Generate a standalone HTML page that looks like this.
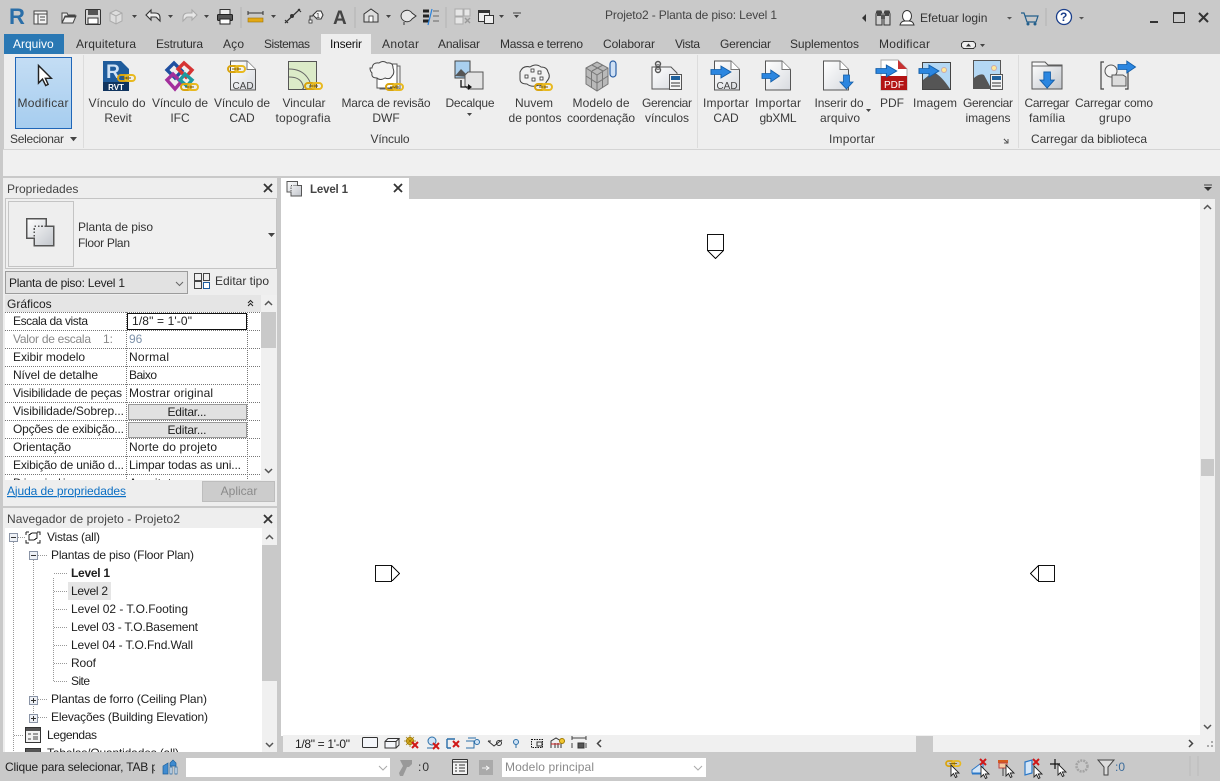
<!DOCTYPE html>
<html lang="pt"><head><meta charset="utf-8"><title>Projeto2 - Planta de piso: Level 1</title>
<style>
html,body{margin:0;padding:0;width:1220px;height:781px;overflow:hidden;background:#c9c9c9}
svg{display:block}
text{font-family:"Liberation Sans",sans-serif;font-size:12px;fill:#1e1e1e}
.r text,text.m{text-anchor:middle}
.t text{fill:#303030}
.r text{fill:#3a3a3a}
</style></head><body>
<svg width="1220" height="781" viewBox="0 0 1220 781" xmlns="http://www.w3.org/2000/svg" shape-rendering="crispEdges">
<defs>
<linearGradient id="pg" x1="0" y1="0" x2="1" y2="1"><stop offset="0" stop-color="#fff"/><stop offset="1" stop-color="#d8dbe0"/></linearGradient>
<linearGradient id="bl" x1="0" y1="0" x2="0" y2="1"><stop offset="0" stop-color="#c4ddf4"/><stop offset="1" stop-color="#a6cdef"/></linearGradient>
<linearGradient id="fl" x1="0" y1="0" x2="1" y2="1"><stop offset="0" stop-color="#fff"/><stop offset="1" stop-color="#c2c6cc"/></linearGradient>
<g id="chain" shape-rendering="auto"><rect x="0" y="0" width="10" height="6" rx="3" fill="none" stroke="#d9a40e" stroke-width="2"/><rect x="7" y="0" width="10" height="6" rx="3" fill="none" stroke="#e8b920" stroke-width="2"/><path d="M4 3h9" stroke="#7a5b05" stroke-width="1"/></g>
<g id="page" shape-rendering="auto"><path d="M.5.5H17L25.500 9V29.500H.5Z" fill="url(#pg)" stroke="#555"/><path d="M17 .5V9H25.500" fill="#fff" stroke="#777"/></g>
<path id="arr" shape-rendering="auto" d="M0 3.500H8V0L16 6 8 12V8.500H0Z" fill="#2b86e0" stroke="#125da8" stroke-width=".8"/>
<path id="arrd" shape-rendering="auto" d="M3.500 0H9.500V7H13L6.500 14 0 7H3.500Z" fill="#2b86e0" stroke="#125da8" stroke-width=".8"/>
<g id="x" shape-rendering="auto"><path d="M0 0L8 8M8 0L0 8" stroke="#333" stroke-width="1.800"/></g>
<g id="xr" shape-rendering="auto"><path d="M0 0L6 6M6 0L0 6" stroke="#d01818" stroke-width="2"/></g>
<g id="cur" shape-rendering="auto"><path d="M0 0V11L2.500 8.500 4.500 12.500 6 11.800 4.300 8H8Z" fill="#fff" stroke="#222" stroke-width=".9"/></g>
<path id="dd" d="M0 0h5l-2.500 3z" fill="#444" shape-rendering="auto"/>
<g id="fplan"><path d="M.5.5H12V5H16.500V16.500H5V12H.5Z" fill="url(#fl)" stroke="#555"/><rect x="5" y="5" width="11.500" height="11.500" fill="none" stroke="#555" stroke-dasharray="1 1"/></g>
<g id="minus"><rect x=".5" y=".5" width="8" height="8" fill="#eef1f6" stroke="#8a94a6"/><path d="M2 4.500h5" stroke="#333"/></g>
<g id="plus"><rect x=".5" y=".5" width="8" height="8" fill="#eef1f6" stroke="#8a94a6"/><path d="M2 4.500h5M4.500 2v5" stroke="#333"/></g>
<clipPath id="propclip"><rect x="5" y="295" width="256" height="185"/></clipPath>
<clipPath id="treeclip"><rect x="5" y="528" width="257" height="224"/></clipPath>
<clipPath id="stclip"><rect x="0" y="752" width="155" height="29"/></clipPath>
</defs>

<!-- base -->
<rect width="1220" height="781" fill="#c9c9c9"/>

<!-- QAT -->
<g shape-rendering="auto">
<text x="9" y="24" style="font-size:22px;font-weight:bold;fill:#2a6ea8">R</text>
<rect x="34" y="11" width="13" height="13" fill="#f4f4f4" stroke="#444"/><path d="M34 14h13M38 14v10M40 17h5M40 20h5" stroke="#444" stroke-width="1" fill="none"/>
<path d="M62 13h5l1 2h7v2H65l-3 6zm0 10h11l3-7H65z" fill="#eee" stroke="#444"/>
<rect x="85.500" y="9.500" width="15" height="15" rx="1" fill="#d8d8d8" stroke="#333"/><rect x="88" y="10" width="10" height="5" fill="#555"/><rect x="88" y="18" width="10" height="6" fill="#fff" stroke="#333"/>
<path d="M110 13l6-3 6 3v8l-6 3-6-3z" fill="#ddd" stroke="#aaa"/><path d="M110 13l6 3 6-3M116 16v8" stroke="#aaa" fill="none"/>
<use href="#dd" x="132" y="15"/>
<path d="M146 15l5-5v3h4q5 0 5 5v3l-3-3q0-1-2-1h-4v3z" fill="#eee" stroke="#333" stroke-width="1.100"/>
<use href="#dd" x="168" y="15"/>
<path d="M197 15l-5-5v3h-4q-5 0-5 5v3l3-3q0-1 2-1h4v3z" fill="#e6e6e6" stroke="#aaa" stroke-width="1.100"/>
<use href="#dd" x="204" y="15"/>
<rect x="220" y="9.500" width="10" height="6" fill="#eee" stroke="#333"/><rect x="217.500" y="14.500" width="15" height="6" rx="1" fill="#555" stroke="#222"/><rect x="220" y="19" width="10" height="5" fill="#fff" stroke="#222"/>
<path d="M248 13h15M248 11v4M263 11v4" stroke="#333" fill="none"/><rect x="248" y="18" width="15" height="4" fill="#e3a814" stroke="#9c7308" stroke-width=".6"/>
<use href="#dd" x="271" y="15"/>
<path d="M285 23l15-14M285 20l3 3M298 9l3 3" stroke="#333" stroke-width="1.200" fill="none"/><circle cx="292" cy="16" r="2" fill="#333"/>
<path d="M310 21v-5h3" stroke="#333" fill="none"/><rect x="309" y="20" width="3" height="3" fill="#fff" stroke="#333" stroke-width=".8"/><path d="M313 15l4-4h4l2 4-2 4h-4z" fill="#f5f5f5" stroke="#333"/><text x="316" y="18" style="font-size:7px">1</text>
<text x="333" y="24" style="font-size:19px;font-weight:bold;fill:#444">A</text>
<path d="M364 14l7-5 7 5v8h-14z" fill="#ddd" stroke="#333"/><rect x="369" y="16" width="4" height="6" fill="#fff" stroke="#333" stroke-width=".8"/>
<use href="#dd" x="386" y="15"/>
<path d="M401 16a6 6 0 0 1 11-3l4 3-4 3a6 6 0 0 1-11-3z" fill="#e6e6e6" stroke="#333"/><path d="M404 22v3" stroke="#333"/>
<path d="M423 11h6M423 16h6M423 21h6" stroke="#222" stroke-width="3" fill="none"/><path d="M433 11h6M433 16h6M433 21h6" stroke="#666" fill="none"/><path d="M432 9l-4 16" stroke="#2a83dc" stroke-width="1.200"/>
<rect x="455" y="9" width="8" height="7" fill="#e6e6e6" stroke="#aaa"/><rect x="464" y="9" width="6" height="7" fill="#e6e6e6" stroke="#aaa"/><rect x="455" y="17" width="8" height="7" fill="#e6e6e6" stroke="#aaa"/><path d="M465 18l5 5M470 18l-5 5" stroke="#999" stroke-width="1.400"/>
<rect x="478.500" y="10.500" width="11" height="11" fill="#eee" stroke="#333"/><rect x="484.500" y="15.500" width="9" height="8" fill="#eee" stroke="#333"/><rect x="479" y="11" width="10" height="2" fill="#333"/>
<use href="#dd" x="499" y="15"/>
<path d="M513 13h8" stroke="#444"/><use href="#dd" x="514" y="15"/>
</g>
<path d="M241 7v21M355 7v21M446 7v21M1046 8v18" stroke="#b2b2b2"/>
<text class="m" x="691" y="19" textLength="172" style="fill:#444">Projeto2 - Planta de piso: Level 1</text>

<g shape-rendering="auto">
<path d="M866 14v8l-4-4z" fill="#333"/>
<path d="M876 14l1-3h4l1 3v11h-6zM884 14l1-3h4l1 3v11h-6z" fill="#cfcfcf" stroke="#333"/><rect x="877" y="11" width="4" height="5" fill="#444"/><rect x="885" y="11" width="4" height="5" fill="#444"/><rect x="881" y="15" width="4" height="4" fill="#555"/>
<ellipse cx="907" cy="16" rx="4.500" ry="5.500" fill="#fff" stroke="#333"/><path d="M900 25q1-4 5-4h4q4 0 5 4z" fill="#fff" stroke="#333"/>
<path d="M1021 13h3l3 9h9l2-6h-13" fill="none" stroke="#235f8c" stroke-width="1.200"/><circle cx="1028" cy="24" r="1.500" fill="#235f8c"/><circle cx="1035" cy="24" r="1.500" fill="#235f8c"/>
<circle cx="1064" cy="17" r="7.500" fill="#fff" stroke="#1b3f8b" stroke-width="1.300"/>
<path d="M1007 17h5l-2.500 2.500zM1079 17h5l-2.500 2.500z" fill="#555"/>
</g>
<text x="920" y="22" style="fill:#333">Efetuar login</text>
<text x="1060" y="21" style="font-weight:bold;font-size:12px;fill:#1b3f8b">?</text>
<rect x="1150" y="21" width="8" height="2" fill="#333"/>
<rect x="1173.500" y="12.500" width="11" height="10" fill="none" stroke="#333" stroke-width="1"/><rect x="1173" y="12" width="12" height="2" fill="#333"/>
<path d="M1199 13l9 9M1208 13l-9 9" stroke="#333" stroke-width="2" shape-rendering="auto"/>

<!-- tabs -->
<rect x="4" y="34" width="60" height="20" fill="#2a78b4"/>
<text x="13" y="48" style="fill:#fff">Arquivo</text>
<rect x="321" y="34" width="50" height="20" fill="#eeeeee"/>
<g class="t">
<text x="76" y="48" textLength="60">Arquitetura</text>
<text x="156" y="48" textLength="47">Estrutura</text>
<text x="223" y="48" textLength="21">Aço</text>
<text x="264" y="48" textLength="46">Sistemas</text>
<text x="330" y="48" textLength="32" style="fill:#111">Inserir</text>
<text x="382" y="48" textLength="37">Anotar</text>
<text x="438" y="48" textLength="42">Analisar</text>
<text x="500" y="48" textLength="83">Massa e terreno</text>
<text x="603" y="48" textLength="52">Colaborar</text>
<text x="675" y="48" textLength="25">Vista</text>
<text x="720" y="48" textLength="51">Gerenciar</text>
<text x="790" y="48" textLength="69">Suplementos</text>
<text x="879" y="48" textLength="51">Modificar</text>
</g>
<rect x="961.500" y="41.500" width="14" height="7" rx="3" fill="#eee" stroke="#333"/><path d="M966 46.500h5l-2.500-3z" fill="#333" shape-rendering="auto"/><use href="#dd" x="980" y="44"/>

<!-- ribbon -->
<rect x="4" y="54" width="1216" height="95" fill="#eeeeee"/>
<rect x="3" y="149" width="1217" height="1" fill="#d4d4d4"/>
<rect x="3" y="150" width="1217" height="26" fill="#f0f0f0"/>
<rect x="83" y="55" width="1" height="93" fill="#dcdcdc"/>
<rect x="697" y="55" width="1" height="93" fill="#dcdcdc"/>
<rect x="1018" y="55" width="1" height="93" fill="#dcdcdc"/>
<rect x="15.500" y="57.500" width="56" height="71" fill="url(#bl)" stroke="#1f66b8"/>
<use href="#cur" transform="translate(38.500 65.500) scale(1.600)"/>

<g class="r">
<text x="43" y="107" textLength="51">Modificar</text>
<text x="117" y="107" textLength="57">Vínculo do</text><text x="118" y="122">Revit</text>
<text x="180" y="107" textLength="56">Vínculo de</text><text x="180" y="122">IFC</text>
<text x="242" y="107" textLength="56">Vínculo de</text><text x="242" y="122">CAD</text>
<text x="304" y="107" textLength="43">Vincular</text><text x="303" y="122" textLength="55">topografia</text>
<text x="386" y="107" textLength="89">Marca de revisão</text><text x="386" y="122">DWF</text>
<text x="470" y="107" textLength="49">Decalque</text>
<text x="534" y="107" textLength="38">Nuvem</text><text x="535" y="122" textLength="53">de pontos</text>
<text x="601" y="107" textLength="57">Modelo de</text><text x="601" y="122" textLength="68">coordenação</text>
<text x="667" y="107" textLength="50">Gerenciar</text><text x="667" y="122" textLength="44">vínculos</text>
<text x="726" y="107" textLength="46">Importar</text><text x="726" y="122">CAD</text>
<text x="778" y="107" textLength="46">Importar</text><text x="778" y="122" textLength="37">gbXML</text>
<text x="839" y="107" textLength="49">Inserir do</text><text x="840" y="122" textLength="40">arquivo</text>
<text x="892" y="107">PDF</text>
<text x="935" y="107" textLength="44">Imagem</text>
<text x="988" y="107" textLength="50">Gerenciar</text><text x="988" y="122" textLength="45">imagens</text>
<text x="1047" y="107" textLength="45">Carregar</text><text x="1047" y="122" textLength="36">família</text>
<text x="1114" y="107" textLength="78">Carregar como</text><text x="1115" y="122" textLength="32">grupo</text>
<text x="390" y="143" textLength="39">Vínculo</text>
<text x="852" y="143" textLength="46">Importar</text>
<text x="1089" y="143" textLength="116">Carregar da biblioteca</text>
</g>
<text x="10" y="143" textLength="54" style="fill:#3a3a3a">Selecionar</text>
<use href="#dd" transform="translate(70 137) scale(1.400)"/>
<use href="#dd" x="467" y="113"/>
<use href="#dd" x="866" y="109"/>
<path d="M1008 139v4h-4M1004 139l4 4" stroke="#555" fill="none"/>

<!-- ribbon icons -->
<g shape-rendering="auto">
<!-- rvt -->
<path d="M103 61h18l8 8v22h-26z" fill="#1f5c9c"/><rect x="103" y="82" width="26" height="9" fill="#10345f"/>
<text x="113" y="78" style="font-size:19px;font-weight:bold;fill:#cfe2f5;text-anchor:middle">R</text>
<text x="116" y="90" style="font-size:8px;font-weight:bold;fill:#fff;text-anchor:middle">RVT</text>
<use href="#chain" x="118" y="75"/>
<!-- ifc -->
<g fill="none" stroke-width="3.400"><path d="M167 70l7-7 8 8-7 7z" stroke="#1f4fa0"/><path d="M178 69l6-6 8 7-6 7z" stroke="#d63434"/><path d="M167 80l6-6 8 8-6 7z" stroke="#a32f9c"/><path d="M180 80l5-6 7 6-5 6z" stroke="#1d9aa0"/></g>
<use href="#chain" x="181" y="84"/>
<!-- cad -->
<use href="#page" x="230" y="60.500"/><text x="243" y="89" style="font-size:10px;fill:#444;text-anchor:middle">CAD</text><use href="#chain" x="228" y="66"/>
<!-- topo -->
<rect x="288.500" y="61.500" width="28" height="28" fill="#dcebc8" stroke="#555"/><path d="M289 69q12 0 18 8t2 12M289 77q10 0 13 6t0 6" fill="none" stroke="#666"/>
<use href="#chain" x="305" y="83"/>
<!-- dwf -->
<rect x="380" y="66" width="20" height="23" fill="#eee" stroke="#666"/><rect x="377" y="64" width="20" height="24" fill="#fff" stroke="#555"/>
<path d="M372 68q1-6 7-5 4-3 8 0 6-1 6 5 2 5-1 8-2 4-7 2-5 3-8 0-6 0-5-5-2-2-2-5z" fill="#f2f2f2" stroke="#444"/><use href="#chain" x="386" y="84"/>
<!-- decal -->
<rect x="455" y="61" width="15" height="17" fill="#a9cfee" stroke="#444"/><path d="M455 76l6-7 8 8z" fill="#555"/>
<path d="M468 72h15v17h-15l-3-3V75z" fill="#e3e3e3" stroke="#555"/><path d="M461 80v7h8" fill="none" stroke="#111" stroke-width="1.300"/><path d="M468 84l4 3-4 3z" fill="#111"/>
<!-- nuvem -->
<path d="M520 72q3-7 10-5 6-4 11 0 6 0 7 5 3 5-1 9-3 6-8 4-7 3-12-1-7 0-7-5z" fill="#f2f2f2" stroke="#444"/>
<g fill="#fff" stroke="#333" stroke-width=".8"><rect x="531" y="69" width="3" height="3"/><rect x="538" y="71" width="3" height="3"/><rect x="525" y="75" width="3" height="3"/><rect x="532" y="78" width="3" height="3"/><rect x="540" y="77" width="3" height="3"/></g>
<use href="#chain" x="535" y="84"/>
<!-- modelo -->
<g fill="#b9b9b9" stroke="#777"><path d="M586 68l11-6 11 6v16l-11 7-11-7z"/><path d="M586 68l11 7 11-7M597 75v16M586 76l11 7 11-7M591.500 71v17M602.500 71v17M592 65l11 6M603 65l-11 6" fill="none"/></g>
<path d="M610 66v-2a3 3 0 0 1 6 0v10a3 3 0 0 1-6 0v-8" fill="#cfe0f4" stroke="#2a5fa5" stroke-width="1.200"/>
<!-- gerenciar v -->
<path d="M652 67h19l6 6v16h-25z" fill="url(#pg)" stroke="#555"/><circle cx="658" cy="64" r="2.500" fill="none" stroke="#555" stroke-width="1.400"/><circle cx="658" cy="70" r="2.500" fill="none" stroke="#555" stroke-width="1.400"/><circle cx="658" cy="67" r="2.500" fill="none" stroke="#777"/>
<rect x="669.500" y="74.500" width="12" height="15" fill="#f5f5f5" stroke="#555"/><rect x="671" y="76" width="9" height="4" fill="#21619c"/><path d="M671 83h9M671 86h9" stroke="#333"/>
<!-- importar cad -->
<use href="#page" x="714" y="60.500"/><text x="727" y="89" style="font-size:10px;fill:#444;text-anchor:middle">CAD</text><use href="#arr" transform="translate(711 66) scale(1.250 1)"/>
<!-- gbxml -->
<use href="#page" x="765" y="60.500"/><use href="#arr" transform="translate(762 70) scale(1.100 1)"/>
<!-- inserir -->
<use href="#page" x="823" y="60.500"/><use href="#arrd" transform="translate(840 75)"/>
<!-- pdf -->
<path d="M881 60h17l9 9v21h-26z" fill="#fff" stroke="#aaa"/><path d="M898 60l9 9h-9z" fill="#c83232"/><rect x="881" y="76" width="26" height="14" fill="#b31414"/>
<text x="894" y="88" style="font-size:10px;fill:#fff;text-anchor:middle">PDF</text><use href="#arr" transform="translate(876 65) scale(1.300 1)"/>
<!-- imagem -->
<rect x="922.500" y="62.500" width="28" height="27" fill="#b4d8f4" stroke="#444"/><path d="M923 89V80l10-8q8 3 17 17z" fill="#555"/><circle cx="944" cy="70" r="2.500" fill="#ffe896" stroke="#caa"/><use href="#arr" transform="translate(919 65) scale(1.250 1)"/>
<!-- ger img -->
<rect x="973.500" y="60.500" width="27" height="28" fill="#b4d8f4" stroke="#555"/><path d="M974 88V78q6-5 10-3l7 13z" fill="#555"/><circle cx="994" cy="68" r="2.500" fill="#ffe896" stroke="#caa"/>
<rect x="990.500" y="74.500" width="12" height="15" fill="#f5f5f5" stroke="#555"/><rect x="992" y="76" width="9" height="4" fill="#21619c"/><path d="M992 83h9M992 86h9" stroke="#333"/>
<!-- carregar fam -->
<path d="M1032 62h13l3 3h14v24h-30z" fill="url(#fl)" stroke="#555"/><path d="M1032 66h30" stroke="#666"/><use href="#arrd" transform="translate(1040 72) scale(1.100 1.150)"/>
<!-- grupo -->
<path d="M1104 62h-3v27h3M1128 65v24h-3" fill="none" stroke="#444" stroke-width="1.200"/><circle cx="1111" cy="71" r="6" fill="#f4f4f4" stroke="#555"/>
<path d="M1112 75h11l3 2v9h-14z" fill="#ddd" stroke="#555"/><use href="#arr" transform="translate(1118 61) scale(1.100 1)"/>
</g>

<!-- left panels -->
<rect x="3" y="178" width="274" height="328" fill="#eeeeee"/>
<text x="7" y="193" style="fill:#444">Propriedades</text>
<use href="#x" x="264" y="184"/>
<rect x="5.500" y="198.500" width="271" height="70" fill="#f0f0f0" stroke="#c4c4c4"/>
<rect x="8.500" y="201.500" width="65" height="65" fill="#eeeeee" stroke="#c4c4c4"/>
<use href="#fplan" transform="translate(26 218) scale(1.680)"/>
<text x="78" y="231" textLength="75" style="fill:#333">Planta de piso</text>
<text x="78" y="247" textLength="52" style="fill:#333">Floor Plan</text>
<path d="M268 233h7l-3.500 4z" fill="#444" shape-rendering="auto"/>
<rect x="5.500" y="271.500" width="182" height="22" fill="#e2e2e2" stroke="#9c9c9c"/>
<text x="9" y="287" textLength="116" style="fill:#1e1e1e">Planta de piso: Level 1</text>
<path d="M176 282l3.500 3.500 3.500-3.500" fill="none" stroke="#666" shape-rendering="auto"/>
<g fill="none" stroke="#444"><rect x="194.500" y="273.500" width="7" height="7"/><rect x="203.500" y="273.500" width="6" height="7"/><rect x="194.500" y="281.500" width="7" height="7"/></g><rect x="203.500" y="282.500" width="6" height="6" fill="#fff" stroke="#1f5c9c"/>
<text x="215" y="285" textLength="54" style="fill:#333">Editar tipo</text>

<!-- properties table -->
<rect x="5" y="295" width="256" height="185" fill="#fff"/>
<rect x="5" y="295" width="256" height="17" fill="#e5e5e5"/>
<text x="7" y="308" style="fill:#1e1e1e">Gráficos</text>
<path d="M248 303l2.500-2.500 2.500 2.500M248 306l2.500-2.500 2.500 2.500" fill="none" stroke="#222" shape-rendering="auto"/>
<g clip-path="url(#propclip)">
<g stroke="#777" stroke-dasharray="1 1" fill="none">
<path d="M5 330.500H260M5 348.500H260M5 366.500H260M5 384.500H260M5 402.500H260M5 420.500H260M5 438.500H260M5 456.500H260M5 474.500H260M5 312.500H260"/>
<path d="M126.500 312V480M247.500 312V480"/>
</g>
<text x="13" y="325" textLength="75">Escala da vista</text>
<text x="13" y="343" textLength="78" style="fill:#888">Valor de escala</text><text x="103" y="343" style="fill:#888">1:</text><text x="129" y="343" style="fill:#7e92aa">96</text>
<text x="13" y="361" textLength="72">Exibir modelo</text><text x="129" y="361" textLength="40">Normal</text>
<text x="13" y="379" textLength="85">Nível de detalhe</text><text x="129" y="379" textLength="28">Baixo</text>
<text x="13" y="397" textLength="109">Visibilidade de peças</text><text x="129" y="397" textLength="84">Mostrar original</text>
<text x="13" y="415" textLength="111">Visibilidade/Sobrep...</text>
<text x="13" y="433" textLength="111">Opções de exibição...</text>
<text x="13" y="451" textLength="58">Orientação</text><text x="129" y="451" textLength="88">Norte do projeto</text>
<text x="13" y="469" textLength="111">Exibição de união d...</text><text x="129" y="469" textLength="112">Limpar todas as uni...</text>
<text x="13" y="487" textLength="70">Disciplina</text><text x="129" y="487" textLength="60">Arquitetura</text>
<rect x="128.500" y="404.500" width="118" height="15" fill="#e1e1e1" stroke="#999"/>
<rect x="128.500" y="422.500" width="118" height="15" fill="#e1e1e1" stroke="#999"/>
<text class="m" x="187" y="416" textLength="39">Editar...</text>
<text class="m" x="187" y="434" textLength="39">Editar...</text>
<rect x="127.500" y="313.500" width="119" height="16" fill="#fff" stroke="#111"/>
<text x="132" y="325" textLength="60">1/8" = 1'-0"</text>
</g>
<rect x="261" y="295" width="16" height="185" fill="#f0f0f0"/>
<rect x="261" y="312" width="15" height="36" fill="#c9c9c9"/>
<path d="M265 305l3.500-3.500 3.500 3.500M265 469l3.500 3.500 3.500-3.500" fill="none" stroke="#555" stroke-width="1.500" shape-rendering="auto"/>
<text x="7" y="495" textLength="119" style="fill:#0b6fc4;text-decoration:underline">Ajuda de propriedades</text>
<rect x="202.500" y="481.500" width="72" height="20" fill="#cccccc" stroke="#bdbdbd"/>
<text class="m" x="239" y="495" style="fill:#8a8a8a">Aplicar</text>

<rect x="3" y="508" width="274" height="244" fill="#eeeeee"/>
<text x="7" y="523" textLength="173" style="fill:#444">Navegador de projeto - Projeto2</text>
<use href="#x" x="264" y="515"/>
<rect x="5" y="528" width="257" height="224" fill="#fff"/>
<rect x="262" y="528" width="15" height="224" fill="#f0f0f0"/>
<rect x="262" y="545" width="15" height="136" fill="#c9c9c9"/>
<path d="M266 539l3.500-3.500 3.500 3.500M266 743l3.500 3.500 3.500-3.500" fill="none" stroke="#555" stroke-width="1.500" shape-rendering="auto"/>
<g clip-path="url(#treeclip)">
<g stroke="#999" stroke-dasharray="1 1" fill="none">
<path d="M13.500 542V752M33.500 560V720M53.500 578V681"/>
<path d="M18 537.500H25M38 555.500H48M54 573.500H68M54 591.500H68M54 609.500H68M54 627.500H68M54 645.500H68M54 663.500H68M54 681.500H68M38 699.500H48M38 717.500H48M14 735.500H24M14 753.500H24"/>
</g>
<use href="#minus" x="9" y="533"/><use href="#minus" x="29" y="551"/><use href="#plus" x="29" y="696"/><use href="#plus" x="29" y="714"/>
<g fill="none" stroke="#222"><path d="M26 532h3M26 532v3M37 532h3v3M26 540v3h3M40 540v3h-3"/><path d="M29 535l3-2h5v5l-3 2h-5z"/></g>
<rect x="68" y="582" width="43" height="18" fill="#e5e5e5"/>
<text x="47" y="541" textLength="53">Vistas (all)</text>
<text x="51" y="559" textLength="143">Plantas de piso (Floor Plan)</text>
<text x="71" y="577" textLength="39" style="font-weight:bold">Level 1</text>
<text x="71" y="595" textLength="37">Level 2</text>
<text x="71" y="613" textLength="117">Level 02 - T.O.Footing</text>
<text x="71" y="631" textLength="127">Level 03 - T.O.Basement</text>
<text x="71" y="649" textLength="122">Level 04 - T.O.Fnd.Wall</text>
<text x="71" y="667" textLength="25">Roof</text>
<text x="71" y="685" textLength="19">Site</text>
<text x="51" y="703" textLength="156">Plantas de forro (Ceiling Plan)</text>
<text x="51" y="721" textLength="157">Elevações (Building Elevation)</text>
<rect x="25.500" y="727.500" width="15" height="15" fill="#f2f2f2" stroke="#333"/><rect x="26" y="728" width="14" height="3" fill="#555"/><path d="M28 734h3M33 734h5M33 737h5M28 739h3M33 739h5" stroke="#444"/>
<text x="47" y="739" textLength="50">Legendas</text>
<rect x="25.500" y="748.500" width="15" height="15" fill="#f2f2f2" stroke="#333"/><rect x="26" y="749" width="14" height="3" fill="#555"/>
<text x="47" y="757" textLength="132">Tabelas/Quantidades (all)</text>
</g>

<!-- canvas -->
<rect x="277" y="178" width="943" height="603" fill="#c9c9c9"/>
<rect x="281" y="199" width="919" height="537" fill="#fff"/>
<rect x="281" y="178" width="128" height="21" fill="#fff"/>
<use href="#fplan" transform="translate(286.500 181) scale(.9)"/>
<text x="310" y="193" textLength="38" style="font-weight:bold;fill:#444;font-size:11.500px">Level 1</text>
<use href="#x" x="394" y="184"/>
<path d="M1204 185h8" stroke="#444"/><path d="M1204 187h8l-4 4z" fill="#333" shape-rendering="auto"/>
<rect x="1200" y="199" width="15" height="537" fill="#f0f0f0"/>
<rect x="1201" y="459" width="13" height="17" fill="#c9c9c9"/>
<path d="M1204 209l3.500-3.500 3.500 3.500M1204 725l3.500 3.500 3.500-3.500" fill="none" stroke="#555" stroke-width="1.500" shape-rendering="auto"/>
<!-- elevation marks -->
<g fill="#fff" stroke="#111">
<rect x="707.500" y="234.500" width="16" height="16"/>
<path d="M708 251l7.500 7.500 7.500-7.500"/>
<rect x="375.500" y="565.500" width="16" height="16"/>
<path d="M392 566l7.500 7.500-7.500 7.500"/>
<rect x="1038.500" y="565.500" width="16" height="16"/>
<path d="M1038 566l-7.500 7.500 7.500 7.500"/>
</g>

<!-- view bar -->
<rect x="283" y="735" width="932" height="17" fill="#f0f0f0"/>
<rect x="916" y="736" width="17" height="16" fill="#c9c9c9"/>
<path d="M601 740l-3.500 3.500 3.500 3.500M1189 740l3.500 3.500-3.500 3.500" fill="none" stroke="#444" stroke-width="1.500" shape-rendering="auto"/>
<text x="295" y="748" textLength="55">1/8" = 1'-0"</text>
<g shape-rendering="auto" fill="none" stroke="#333">
<rect x="362.500" y="737.500" width="15" height="10" rx="1" fill="#f4f6fa"/>
<path d="M385 741.500h11v6.500h-11zM385 741.500l3-3h11l-3 3M396 748l3-3v-6.500" fill="#f4f6fa"/>
<circle cx="410" cy="741" r="3.500" fill="#f3c730" stroke="#a07a00"/><path d="M410 735v12M404 741h12M406 737l8 8M414 737l-8 8" stroke="#a07a00" stroke-width=".7"/>
<circle cx="432" cy="741" r="4" fill="#cfe3f6" stroke="#2a6ea8"/><path d="M427 748h7" stroke="#2a6ea8"/>
<path d="M447 739h8M447 739v9M447 748h4" stroke="#2a6ea8" stroke-width="1.400"/>
<path d="M466 741h8v7h-8M468 738h8" stroke="#2a6ea8"/><circle cx="477" cy="742" r="2.500" fill="#cfe3f6" stroke="#2a6ea8"/>
<path d="M488 741l6 5 5-4 3-2M488 741h3" stroke="#333"/><circle cx="499" cy="743" r="2.500"/>
<circle cx="516" cy="742" r="2.500" fill="#cfe3f6" stroke="#2a6ea8"/><path d="M516 745v3" stroke="#2a6ea8"/>
<rect x="531.500" y="739.500" width="11" height="8" stroke-dasharray="1.500 1" stroke="#111"/><rect x="537" y="742" width="5" height="4" fill="#eee"/>
<path d="M551 748v-7l5-3 5 3v7M555 748v-5M558 748v-5" stroke="#333"/><path d="M551 744h9" stroke="#c22"/><circle cx="562" cy="741" r="2.500" fill="#f3c730" stroke="#a07a00"/>
<path d="M572 738h14M572 736v4M586 736v4M572 743v5M586 743v5" stroke="#444"/><rect x="578" y="743" width="6" height="5" fill="#555"/>
</g>
<use href="#xr" x="433" y="743"/><use href="#xr" x="453" y="741"/><use href="#xr" x="412" y="742"/>

<!-- status -->
<text x="5" y="771" clip-path="url(#stclip)" textLength="153" style="fill:#1e1e1e">Clique para selecionar, TAB p</text>
<g shape-rendering="auto"><path d="M163 766l5-3v11h-5zM170 763l3-3 3 3v3h-6z" fill="#3f8bd0" stroke="#1b5f9b" stroke-width=".7"/><path d="M170 767h2v7h-2zM175 767h2v7h-2z" fill="#fff" stroke="#1b5f9b" stroke-width=".7"/></g>
<rect x="186" y="758" width="204" height="19" fill="#fff"/>
<path d="M379 766l4 4 4-4" stroke="#aaa" fill="none" shape-rendering="auto"/>
<g shape-rendering="auto"><path d="M400 760h12v4l-3 3h-2l-4 9h-3l-1-3 4-7z" fill="#999"/></g>
<text x="418" y="771" textLength="11" style="fill:#333">:0</text>
<rect x="452.500" y="759.500" width="15" height="15" rx="1" fill="#f2f2f2" stroke="#333"/><path d="M453 762h14" stroke="#333"/><path d="M455 765h2M459 765h6M455 768h2M459 768h6M455 771h2M459 771h6" stroke="#333"/>
<rect x="479" y="760" width="14" height="15" fill="#aaa"/><path d="M482 768h6m-2-2l3 2-3 2" stroke="#eee" fill="none"/>
<rect x="502" y="758" width="204" height="19" fill="#fff"/>
<text x="505" y="771" textLength="89" style="fill:#8a8a8a">Modelo principal</text>
<path d="M694 766l4 4 4-4" stroke="#aaa" fill="none" shape-rendering="auto"/>
<g shape-rendering="auto">
<use href="#chain" transform="translate(946 761) scale(.85)"/><use href="#cur" x="951" y="765"/>
<path d="M972 770l8-6h3v9h-11zM972 774h11" fill="#d5e6f7" stroke="#2a78c8"/><use href="#xr" x="980" y="759"/><use href="#cur" x="981" y="766"/>
<rect x="998" y="760" width="10" height="3" fill="#d65a1c"/><rect x="999" y="763" width="8" height="5" fill="#f5c9a0" stroke="#b44"/><path d="M1003 768v8" stroke="#444"/><use href="#cur" x="1006" y="765"/>
<path d="M1025 762l7-2v13l-7 2z" fill="#d5e6f7" stroke="#2a78c8" stroke-width="1.200"/><use href="#xr" x="1033" y="759"/><use href="#cur" x="1034" y="766"/>
<path d="M1050 764h10M1055 759v10" stroke="#111" stroke-width="1.200"/><use href="#cur" x="1058" y="764"/>
<circle cx="1082" cy="766" r="5.500" fill="none" stroke="#a4a4a4" stroke-width="2.500" stroke-dasharray="2 1"/>
<path d="M1098 760h16l-6 7v8h-4v-8z" fill="#ddd" stroke="#444"/>
</g>
<text x="1115" y="771" style="fill:#3d6d9c">:0</text>
<path d="M1190 756v20M1198 756v20" stroke="#bcbcbc"/>
<g fill="#aaa"><rect x="1211" y="745" width="2" height="2"/><rect x="1207" y="745" width="2" height="2"/><rect x="1211" y="741" width="2" height="2"/></g>
</svg>
</body></html>
